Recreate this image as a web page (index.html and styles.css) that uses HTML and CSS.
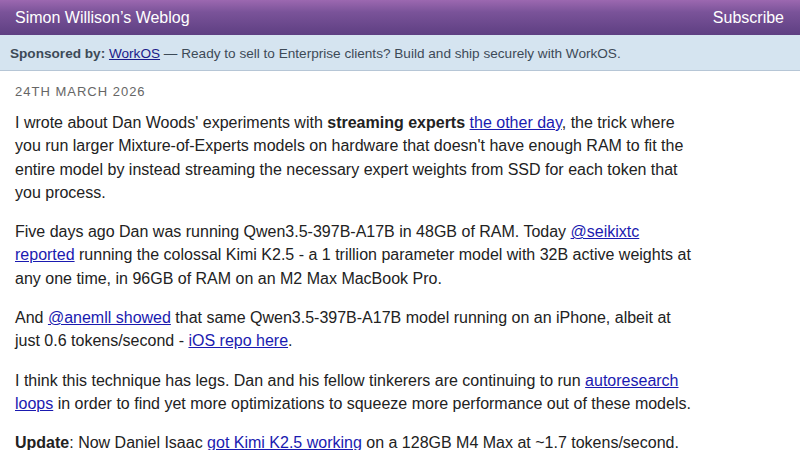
FILE: index.html
```html
<!DOCTYPE html>
<html lang="en">
<head>
<meta charset="utf-8">
<title>Simon Willison’s Weblog</title>
<link rel="stylesheet" href="styles.css">
</head>
<body>
<header class="site-header">
  <a class="site-title" href="#">Simon Willison’s Weblog</a>
  <a class="subscribe" href="#">Subscribe</a>
</header>
<div class="sponsor">
  <strong>Sponsored by:</strong> <a href="#">WorkOS</a> — Ready to sell to Enterprise clients? Build and ship securely with WorkOS.
</div>
<main class="entry">
  <p class="date">24th March 2026</p>
  <p>I wrote about Dan Woods' experiments with <strong>streaming experts</strong> <a href="#">the other day</a>, the trick where you run larger Mixture-of-Experts models on hardware that doesn't have enough RAM to fit the entire model by instead streaming the necessary expert weights from SSD for each token that you process.</p>
  <p>Five days ago Dan was running Qwen3.5-397B-A17B in 48GB of RAM. Today <a href="#">@seikixtc reported</a> running the colossal Kimi K2.5 - a 1 trillion parameter model with 32B active weights at any one time, in 96GB of RAM on an M2 Max MacBook Pro.</p>
  <p>And <a href="#">@anemll showed</a> that same Qwen3.5-397B-A17B model running on an iPhone, albeit at just 0.6 tokens/second - <a href="#">iOS repo here</a>.</p>
  <p>I think this technique has legs. Dan and his fellow tinkerers are continuing to run <a href="#">autoresearch loops</a> in order to find yet more optimizations to squeeze more performance out of these models.</p>
  <p><strong>Update</strong>: Now Daniel Isaac <a href="#">got Kimi K2.5 working</a> on a 128GB M4 Max at ~1.7 tokens/second.</p>
</main>
</body>
</html>
```
FILE: styles.css
```css
* { box-sizing: border-box; }
html, body { margin: 0; padding: 0; background: #fff; }
body {
  font-family: "Liberation Sans", Arial, Helvetica, sans-serif;
  color: #222;
}
.site-header {
  height: 35px;
  display: flex;
  align-items: center;
  justify-content: space-between;
  padding: 1px 16px 0 15px;
  background: linear-gradient(to bottom, #9c68b0 0%, #7a5399 35%, #5e3f82 100%);
}
.site-header a {
  color: #fff;
  text-decoration: none;
  font-size: 16px;
}
.sponsor {
  height: 36px;
  line-height: 37px;
  padding: 0 10px;
  background: #d5e4f0;
  border-bottom: 1px solid #b6c6d6;
  font-size: 13.6px;
  color: #3d4a57;
  white-space: nowrap;
}
.sponsor strong { color: #3d4a57; }
.sponsor a { color: #1a1a8a; text-decoration: underline; }
.entry {
  max-width: 706px;
  padding: 12px 15px 0 15px;
}
.entry p {
  margin: 0 0 16px 0;
  font-size: 16px;
  line-height: 23.3px;
}
.entry p.date {
  font-size: 13px;
  line-height: 18px;
  letter-spacing: 1px;
  text-transform: uppercase;
  color: #666;
  margin-bottom: 10px;
}
.entry a { color: #1a1ab0; text-decoration: underline; }
```
